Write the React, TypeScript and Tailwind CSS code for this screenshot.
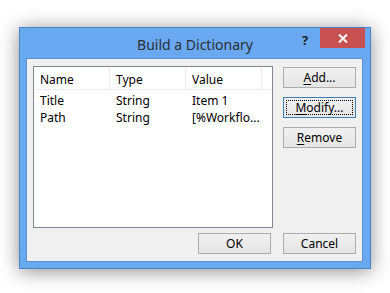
import React from "react";

const font = { fontFamily: '"Noto Sans", "Open Sans", sans-serif' };

function Btn({ children, focused = false, w = "w-[73px]" }: { children: React.ReactNode; focused?: boolean; w?: string }) {
  return (
    <div
      className={`relative ${w} h-[21px] flex items-center justify-center text-[12px] text-black border ${
        focused ? "border-[#3c7fb1]" : "border-[#acacac]"
      } bg-gradient-to-b from-[#f0f0f0] to-[#e5e5e5]`}
    >
      {focused && <div className="absolute inset-[2px] border border-dotted border-black" />}
      <span className="relative leading-none mt-[1px]">{children}</span>
    </div>
  );
}

export default function App() {
  return (
    <div className="w-[390px] h-[293px] bg-white pt-[27px] pl-[19px]" style={font}>
      <div className="w-[352px] h-[242px] border border-[#4a84c8] bg-[#6aa9f1] shadow-[0_2px_18px_rgba(0,0,0,0.45)] flex flex-col">
        <div className="h-[30px] relative flex items-center justify-center">
          <span className="text-[14px] text-[#2b2f36] mt-[3px]">Build a Dictionary</span>
          <span className="absolute left-[282px] top-[6px] text-[13px] font-bold text-[#222] leading-none">?</span>
          <div className="absolute right-[5px] top-0 w-[45px] h-[20px] bg-[#c75050] flex items-center justify-center">
            <svg width="10" height="9" viewBox="0 0 10 9">
              <path d="M1 0.5 L9 8.5 M9 0.5 L1 8.5" stroke="white" strokeWidth="2" />
            </svg>
          </div>
        </div>
        <div className="ml-[6px] w-[337px] h-[204px] border border-[#5a8fd2] bg-[#f0f0f0] flex flex-col px-[6px] pt-[7px]">
          <div className="flex">
            <div className="w-[240px] h-[162px] border border-[#828790] bg-white flex flex-col text-[12px] text-black">
              <div className="h-[23px] flex border-b border-[#e5eef8]">
                <div className="w-[76px] border-r border-[#e5eef8] pl-[6px] pt-[3px] flex items-center">Name</div>
                <div className="w-[76px] border-r border-[#e5eef8] pl-[6px] pt-[3px] flex items-center">Type</div>
                <div className="w-[76px] border-r border-[#e5eef8] pl-[6px] pt-[3px] flex items-center">Value</div>
              </div>
              <div className="h-[17px] mt-[2px] flex items-center">
                <div className="w-[76px] pl-[6px]">Title</div>
                <div className="w-[76px] pl-[6px]">String</div>
                <div className="w-[76px] pl-[6px]">Item 1</div>
              </div>
              <div className="h-[18px] flex items-center">
                <div className="w-[76px] pl-[6px]">Path</div>
                <div className="w-[76px] pl-[6px]">String</div>
                <div className="w-[76px] pl-[6px] whitespace-nowrap">[%Workflo...</div>
              </div>
            </div>
            <div className="ml-[10px] mt-[1px] flex flex-col gap-[9px]">
              <Btn>
                <span className="underline underline-offset-2">A</span>dd...
              </Btn>
              <Btn focused>
                <span className="underline underline-offset-2">M</span>odify...
              </Btn>
              <Btn>
                <span className="underline underline-offset-2">R</span>emove
              </Btn>
            </div>
          </div>
          <div className="flex justify-end gap-[12px] mt-[5px]">
            <Btn>OK</Btn>
            <Btn>Cancel</Btn>
          </div>
        </div>
      </div>
    </div>
  );
}
